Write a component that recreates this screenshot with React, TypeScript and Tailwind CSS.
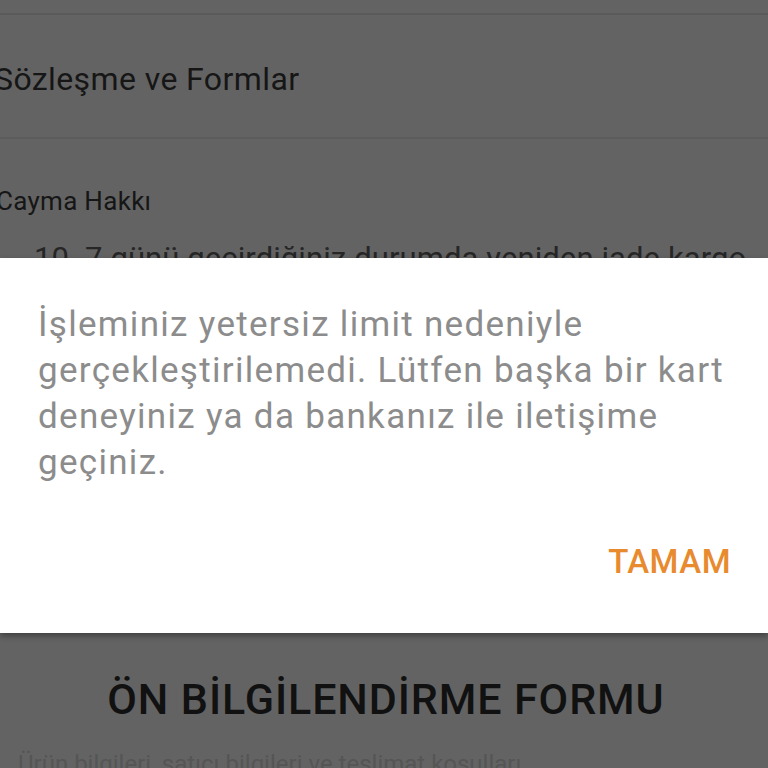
import React from "react";

export default function App() {
  return (
    <div
      className="relative w-[768px] h-[768px] overflow-hidden bg-[#636363]"
      style={{ fontFamily: "Roboto, 'Noto Sans', sans-serif" }}
    >
      {/* background page (dimmed) */}
      <div className="h-[15px] border-b-2 border-[#5a5a5a]" />
      <div className="h-[124px] flex items-center pt-[6px] border-b-2 border-[#5c5c5c]">
        <span className="ml-[-6px] text-[32px] tracking-[0.4px] text-[#161616] leading-none">Sözleşme ve Formlar</span>
      </div>
      <div className="h-[100px] flex items-center pt-[24px]">
        <span className="ml-[-4px] text-[26px] tracking-[0.3px] text-[#161616] leading-none">Cayma Hakkı</span>
      </div>
      <div className="pl-[34px] text-[31px] leading-[40px] tracking-[0.1px] text-[#262626] whitespace-nowrap">
        10. 7 günü geçirdiğiniz durumda yeniden iade kargo
      </div>
      <div className="h-[390px]" />
      <div className="flex justify-center">
        <span className="ml-[4px] text-[43px] font-medium text-[#111111] leading-[60px] tracking-[0.9px]">ÖN BİLGİLENDİRME FORMU</span>
      </div>
      <div className="pl-[18px] pt-[20px] text-[24px] text-[#555555] whitespace-nowrap leading-[30px]">
        Ürün bilgileri, satıcı bilgileri ve teslimat koşulları
      </div>

      {/* dialog */}
      <div className="absolute left-0 right-0 top-[258px] h-[375px] bg-white shadow-[0_3px_6px_rgba(0,0,0,0.35)] flex flex-col">
        <p className="pl-[38px] pr-[20px] pt-[44px] text-[35px] leading-[46px] tracking-[1.3px] text-[#8c8c8c] whitespace-nowrap">
          İşleminiz yetersiz limit nedeniyle
          <br />
          gerçekleştirilemedi. Lütfen başka bir kart
          <br />
          deneyiniz ya da bankanız ile iletişime
          <br />
          geçiniz.
        </p>
        <div className="flex justify-end pr-[37px] mt-[56px]">
          <span className="text-[33px] font-medium text-[#e88a2e] leading-[40px] tracking-[0.5px]">TAMAM</span>
        </div>
      </div>
    </div>
  );
}
